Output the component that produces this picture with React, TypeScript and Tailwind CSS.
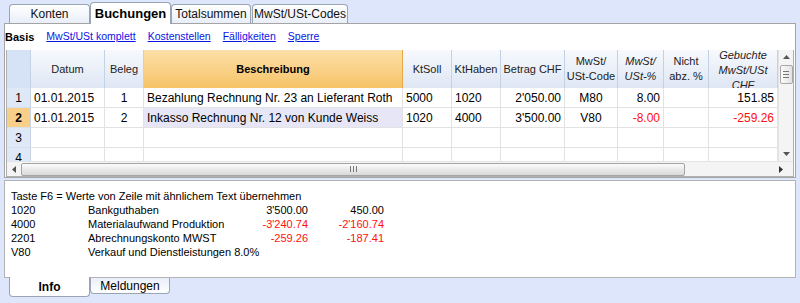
import React from 'react';

const cols = 'grid grid-cols-[24px_74px_39px_259px_49px_49px_64px_53px_46px_45px_69px]';

type Row = {
  n: string;
  datum: string;
  beleg: string;
  text: string;
  soll: string;
  haben: string;
  betrag: string;
  code: string;
  pct: string;
  nicht: string;
  mwst: string;
  neg?: boolean;
  active?: boolean;
};

const rows: Row[] = [
  { n: '1', datum: '01.01.2015', beleg: '1', text: 'Bezahlung Rechnung Nr. 23 an Lieferant Roth', soll: '5000', haben: '1020', betrag: "2'050.00", code: 'M80', pct: '8.00', nicht: '', mwst: '151.85' },
  { n: '2', datum: '01.01.2015', beleg: '2', text: 'Inkasso Rechnung Nr. 12 von Kunde Weiss', soll: '1020', haben: '4000', betrag: "3'500.00", code: 'V80', pct: '-8.00', nicht: '', mwst: '-259.26', neg: true, active: true },
  { n: '3', datum: '', beleg: '', text: '', soll: '', haben: '', betrag: '', code: '', pct: '', nicht: '', mwst: '' },
  { n: '4', datum: '', beleg: '', text: '', soll: '', haben: '', betrag: '', code: '', pct: '', nicht: '', mwst: '' },
];

function TopTab({ label, active }: { label: string; active?: boolean }) {
  if (active) {
    return (
      <div className="w-[81px] h-[22px] -mb-px relative z-10 border border-b-0 border-[#9aa4b4] rounded-t-[4px] bg-white flex items-center justify-center text-[13px] font-bold text-black">
        {label}
      </div>
    );
  }
  return (
    <div className="h-[19px] border border-b-0 border-[#9aa4b4] rounded-t-[4px] bg-gradient-to-b from-[#ffffff] to-[#e9eef8] flex items-center justify-center text-[12px] text-[#111]">
      {label}
    </div>
  );
}

function HeadCell({ children, className = '' }: { children?: React.ReactNode; className?: string }) {
  return (
    <div className={`h-[38px] border-r border-[#c4d2e6] flex items-center justify-center text-center text-[11px] leading-[15px] text-[#222] bg-gradient-to-b from-[#f7f9fd] to-[#dfe7f4] overflow-hidden ${className}`}>
      {children}
    </div>
  );
}

function Cell({ children, className = '' }: { children?: React.ReactNode; className?: string }) {
  return (
    <div className={`h-[20px] border-r border-b border-[#e2e2e2] flex items-center px-[3px] text-[12px] whitespace-nowrap overflow-hidden ${className}`}>
      {children}
    </div>
  );
}

function VScroll() {
  return (
    <div className="w-[15px] bg-[#f4f4f4] border-l border-[#e4e4e4] flex flex-col items-center">
      <div className="h-[14px] flex items-center justify-center">
        <svg width="7" height="4" viewBox="0 0 7 4"><path d="M0 4 L3.5 0 L7 4 Z" fill="#555" /></svg>
      </div>
      <div className="mt-[1px] w-[13px] h-[19px] rounded-[2px] border border-[#a8a8a8] bg-gradient-to-r from-[#fbfbfb] to-[#e2e2e2] flex flex-col items-center justify-center gap-[2px]">
        <div className="w-[6px] h-px bg-[#777]" />
        <div className="w-[6px] h-px bg-[#777]" />
        <div className="w-[6px] h-px bg-[#777]" />
      </div>
      <div className="flex-1" />
      <div className="h-[14px] flex items-center justify-center">
        <svg width="7" height="4" viewBox="0 0 7 4"><path d="M0 0 L7 0 L3.5 4 Z" fill="#555" /></svg>
      </div>
    </div>
  );
}

function HScroll() {
  return (
    <div className="h-[15px] bg-[#f4f4f4] border-t border-[#e4e4e4] flex items-center">
      <div className="w-[14px] flex items-center justify-center">
        <svg width="4" height="7" viewBox="0 0 4 7"><path d="M4 0 L0 3.5 L4 7 Z" fill="#555" /></svg>
      </div>
      <div className="w-[664px] h-[13px] rounded-[2px] border border-[#a4a4a4] bg-gradient-to-b from-[#fbfbfb] to-[#d9d9d9] flex items-center justify-center gap-[2px]">
        <div className="w-px h-[6px] bg-[#777]" />
        <div className="w-px h-[6px] bg-[#777]" />
        <div className="w-px h-[6px] bg-[#777]" />
      </div>
      <div className="flex-1" />
      <div className="w-[24px] flex items-center justify-center">
        <svg width="4" height="7" viewBox="0 0 4 7"><path d="M0 0 L4 3.5 L0 7 Z" fill="#333" /></svg>
      </div>
    </div>
  );
}

export default function App() {
  return (
    <div className="w-[800px] h-[303px] bg-[#dde6fb] overflow-hidden font-['Liberation_Sans',Arial,sans-serif] text-black">
      {/* top tabs */}
      <div className="h-[23px] pl-[9px] flex items-end">
        <div className="w-[81px]"><TopTab label="Konten" /></div>
        <TopTab label="Buchungen" active />
        <div className="w-[80px]"><TopTab label="Totalsummen" /></div>
        <div className="w-[96px] ml-px"><TopTab label="MwSt/USt-Codes" /></div>
      </div>

      {/* main panel */}
      <div className="mx-[4px] h-[155px] border border-[#a4a4a4] bg-white flex flex-col">
        <div className="h-[26px] flex items-center gap-[12px] text-[10.5px]">
          <span className="font-bold text-[11px]">Basis</span>
          <span className="text-[#0a14e6] underline">MwSt/USt komplett</span>
          <span className="text-[#0a14e6] underline">Kostenstellen</span>
          <span className="text-[#0a14e6] underline">Fälligkeiten</span>
          <span className="text-[#0a14e6] underline">Sperre</span>
        </div>

        <div className="ml-[1px] mr-px h-[127px] border border-[#b0b0b0] border-t-0 flex flex-col">
          <div className="flex h-[111px]">
            <div className="w-[771px] overflow-hidden">
              <div className={cols}>
                <HeadCell className="!bg-none bg-[#d6e2f5]" />
                <HeadCell>Datum</HeadCell>
                <HeadCell>Beleg</HeadCell>
                <HeadCell className="from-[#fce0a8] to-[#f6c366] font-bold text-black border-r-[#e8a848]">Beschreibung</HeadCell>
                <HeadCell>KtSoll</HeadCell>
                <HeadCell>KtHaben</HeadCell>
                <HeadCell>Betrag CHF</HeadCell>
                <HeadCell>MwSt/<br />USt-Code</HeadCell>
                <HeadCell className="italic">MwSt/<br />USt-%</HeadCell>
                <HeadCell>Nicht<br />abz. %</HeadCell>
                <HeadCell className="italic !items-start">
                  <span className="leading-[15px] -mt-[2px]">Gebuchte<br />MwSt/USt<br />CHF</span>
                </HeadCell>
              </div>
              {rows.map((r) => (
                <div key={r.n} className={cols}>
                  <Cell className={`justify-center border-r-[#c8d4e6] border-b-[#d8e0ee] ${r.active ? 'bg-[#f8cf88] font-bold' : 'bg-[#dfe8f6]'}`}>{r.n}</Cell>
                  <Cell>{r.datum}</Cell>
                  <Cell className="justify-center">{r.beleg}</Cell>
                  <Cell className={r.active ? 'bg-[#e6e6f6]' : ''}>{r.text}</Cell>
                  <Cell>{r.soll}</Cell>
                  <Cell>{r.haben}</Cell>
                  <Cell className="justify-end">{r.betrag}</Cell>
                  <Cell className="justify-center">{r.code}</Cell>
                  <Cell className={`justify-end ${r.neg ? 'text-[#ff1010]' : ''}`}>{r.pct}</Cell>
                  <Cell className="justify-end">{r.nicht}</Cell>
                  <Cell className={`justify-end ${r.neg ? 'text-[#ff1010]' : ''}`}>{r.mwst}</Cell>
                </div>
              ))}
            </div>
            <VScroll />
          </div>
          <HScroll />
        </div>
      </div>

      {/* info panel */}
      <div className="mt-[2px] mx-[4px] h-[98px] border border-[#b4b4b4] bg-white pl-[6px] pt-[8px] text-[11px] leading-[14px]">
        <div>Taste F6 = Werte von Zeile mit ähnlichem Text übernehmen</div>
        <div className="grid grid-cols-[77px_150px_70px_76px]">
          <span>1020</span><span>Bankguthaben</span><span className="text-right">3'500.00</span><span className="text-right">450.00</span>
          <span>4000</span><span>Materialaufwand Produktion</span><span className="text-right text-[#ff1010]">-3'240.74</span><span className="text-right text-[#ff1010]">-2'160.74</span>
          <span>2201</span><span>Abrechnungskonto MWST</span><span className="text-right text-[#ff1010]">-259.26</span><span className="text-right text-[#ff1010]">-187.41</span>
          <span>V80</span><span className="col-span-3">Verkauf und Dienstleistungen 8.0%</span>
        </div>
      </div>

      {/* bottom tabs */}
      <div className="pl-[9px] flex items-start">
        <div className="w-[81px] h-[20px] -mt-px relative z-10 border border-t-0 border-[#9aa4b4] rounded-b-[4px] bg-white flex items-center justify-center text-[12px] font-bold">Info</div>
        <div className="w-[80px] h-[16px] border border-t-0 border-[#9aa4b4] rounded-b-[4px] bg-gradient-to-t from-[#ffffff] to-[#e9eef8] flex items-center justify-center text-[12px]">Meldungen</div>
      </div>
    </div>
  );
}
